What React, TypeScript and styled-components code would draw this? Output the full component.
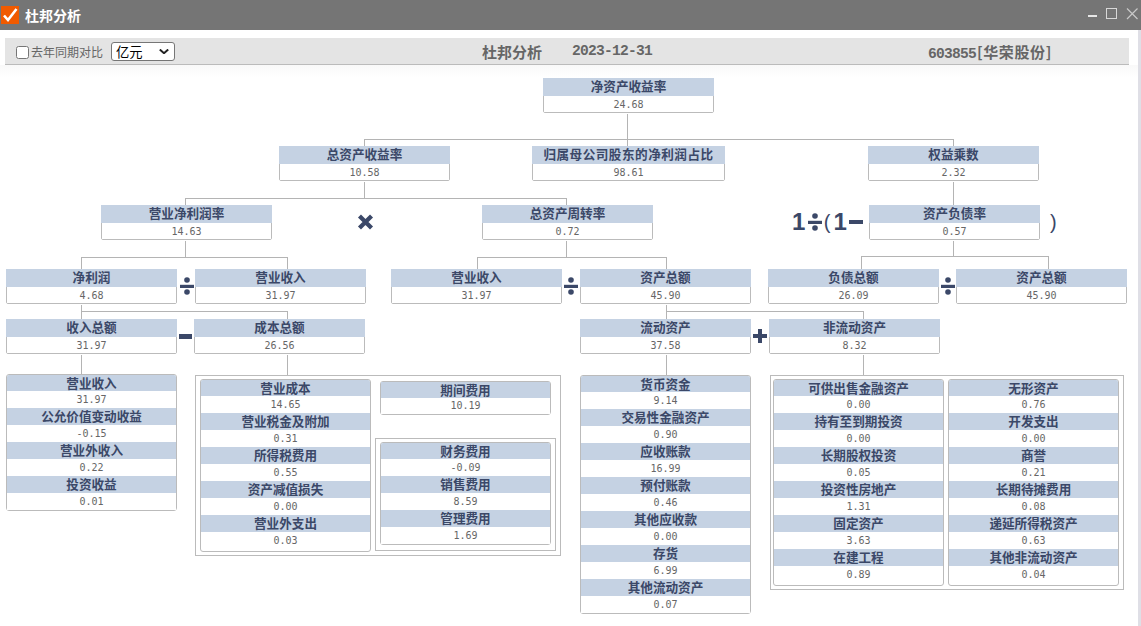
import React from "react";
import styled, { createGlobalStyle } from "styled-components";

const CANVAS_TOP = 65;
const LABEL_FONT = `"Noto Sans CJK SC", "Liberation Sans", sans-serif`;
const NUMBER_FONT = `"Liberation Mono", "Noto Sans CJK SC", monospace`;
const VALUE_FONT = `"DejaVu Sans Mono", "Liberation Mono", monospace`;
const INK = "#3b4868";

type Item = [string, string];

const singleNodes = [
  { x: 543, y: 78, label: "净资产收益率", value: "24.68" },
  { x: 279, y: 146, label: "总资产收益率", value: "10.58" },
  { x: 532, y: 146, w: 193, label: "归属母公司股东的净利润占比", value: "98.61" },
  { x: 868, y: 146, label: "权益乘数", value: "2.32" },
  { x: 101, y: 205, label: "营业净利润率", value: "14.63" },
  { x: 482, y: 205, label: "总资产周转率", value: "0.72" },
  { x: 869, y: 205, label: "资产负债率", value: "0.57" },
  { x: 6, y: 269, label: "净利润", value: "4.68" },
  { x: 195, y: 269, label: "营业收入", value: "31.97" },
  { x: 391, y: 269, label: "营业收入", value: "31.97" },
  { x: 580, y: 269, label: "资产总额", value: "45.90" },
  { x: 768, y: 269, label: "负债总额", value: "26.09" },
  { x: 956, y: 269, label: "资产总额", value: "45.90" },
  { x: 6, y: 319, label: "收入总额", value: "31.97" },
  { x: 194, y: 319, label: "成本总额", value: "26.56" },
  { x: 580, y: 319, label: "流动资产", value: "37.58" },
  { x: 769, y: 319, label: "非流动资产", value: "8.32" },
];

const incomeItems: Item[] = [
  ["营业收入", "31.97"],
  ["公允价值变动收益", "-0.15"],
  ["营业外收入", "0.22"],
  ["投资收益", "0.01"],
];

const costItems: Item[] = [
  ["营业成本", "14.65"],
  ["营业税金及附加", "0.31"],
  ["所得税费用", "0.55"],
  ["资产减值损失", "0.00"],
  ["营业外支出", "0.03"],
];

const periodItems: Item[] = [
  ["财务费用", "-0.09"],
  ["销售费用", "8.59"],
  ["管理费用", "1.69"],
];

const currentItems: Item[] = [
  ["货币资金", "9.14"],
  ["交易性金融资产", "0.90"],
  ["应收账款", "16.99"],
  ["预付账款", "0.46"],
  ["其他应收款", "0.00"],
  ["存货", "6.99"],
  ["其他流动资产", "0.07"],
];

const fixedItemsA: Item[] = [
  ["可供出售金融资产", "0.00"],
  ["持有至到期投资", "0.00"],
  ["长期股权投资", "0.05"],
  ["投资性房地产", "1.31"],
  ["固定资产", "3.63"],
  ["在建工程", "0.89"],
];

const fixedItemsB: Item[] = [
  ["无形资产", "0.76"],
  ["开发支出", "0.00"],
  ["商誉", "0.21"],
  ["长期待摊费用", "0.08"],
  ["递延所得税资产", "0.63"],
  ["其他非流动资产", "0.04"],
];

// connector lines, in page coordinates
const links = [
  "M627 113V146M364 146V139H953V146",
  "M364 181V198M185 205V198H566V205",
  "M953 181V205",
  "M185 240V257M81 269V257H287V269",
  "M566 240V257M477 269V257H666V269",
  "M953 240V256M861 269V256H1048V269",
  "M81 304V319M81 311H287V319",
  "M81 354V374",
  "M287 354V375",
  "M666 304V319M666 311H863V319",
  "M666 354V375",
  "M863 354V375",
  "M466 415V438",
];

const Card = ({ label, value }: { label: string; value: string }) => (
  <>
    <NodeLabel>{label}</NodeLabel>
    <NodeValue>{value}</NodeValue>
  </>
);

const ItemStack = ({ items }: { items: Item[] }) => (
  <Stack>
    {items.map(([label, value]) => (
      <Card key={label} label={label} value={value} />
    ))}
  </Stack>
);

const Divide = ({ x, y }: { x: number; y: number }) => (
  <OperatorIcon $x={x} $y={y} width="14" height="18" viewBox="0 0 14 18">
    <circle cx="7" cy="3" r="2.8" />
    <rect x="0" y="7.8" width="14" height="3.2" />
    <circle cx="7" cy="15" r="2.8" />
  </OperatorIcon>
);

const App = () => {
  return (
    <Page>
      <GlobalStyle />
      <TitleBar>
        <TitleLeft>
          <CheckIcon viewBox="0 0 18 18">
            <path d="M3 9.5 L7 14 L15.5 3" fill="none" stroke="#fff" strokeWidth="2.6" />
          </CheckIcon>
          <TitleText>杜邦分析</TitleText>
        </TitleLeft>
        <WindowControls viewBox="0 0 52 12">
          <path d="M2 8H11" stroke="#e6e6e6" strokeWidth="2" />
          <rect x="20.5" y="0.5" width="10" height="10" fill="none" stroke="#d8d8d8" />
          <path d="M41 0.5L51.5 11M51.5 0.5L41 11" stroke="#c8c8c8" strokeWidth="1.2" />
        </WindowControls>
      </TitleBar>
      <Body>
        <Toolbar>
          <ToolLeft>
            <CompareBox type="checkbox" />
            <CompareText>去年同期对比</CompareText>
            <UnitSelect>
              <span>亿元</span>
              <svg width="10" height="5" viewBox="0 0 10 5">
                <path d="M0.8 0.5L5 4.2L9.2 0.5" fill="none" stroke="#222" strokeWidth="2" />
              </svg>
            </UnitSelect>
          </ToolLeft>
          <ToolTitle>杜邦分析</ToolTitle>
          <ToolDate>2023-12-31</ToolDate>
          <ToolCode>
            603855<CompanyName>[华荣股份]</CompanyName>
          </ToolCode>
        </Toolbar>
        <Canvas>
          <Links>
            <path d={links.join("")} fill="none" stroke="#b4b4b4" shapeRendering="crispEdges" transform={`translate(0.5 ${0.5 - CANVAS_TOP})`} />
          </Links>

          {singleNodes.map((n) => (
            <Node key={`${n.label}${n.x}`} $x={n.x} $y={n.y} $w={n.w ?? 171} $wide={n.label.length > 8}>
              <Card label={n.label} value={n.value} />
            </Node>
          ))}

          <Placed $x={6} $y={374}>
            <ItemStack items={incomeItems} />
          </Placed>

          <Frame $x={195} $y={375}>
            <ItemStack items={costItems} />
            <PeriodColumn>
              <PeriodNode>
                <Card label="期间费用" value="10.19" />
              </PeriodNode>
              <InnerFrame>
                <ItemStack items={periodItems} />
              </InnerFrame>
            </PeriodColumn>
          </Frame>

          <Placed $x={580} $y={375}>
            <ItemStack items={currentItems} />
          </Placed>

          <FixedFrame $x={770} $y={375}>
            <ItemStack items={fixedItemsA} />
            <ItemStack items={fixedItemsB} />
          </FixedFrame>

          <OperatorIcon $x={357} $y={214} width="17" height="16" viewBox="0 0 17 16">
            <path d="M3 2.5L14 13.5M14 2.5L3 13.5" fill="none" stroke={INK} strokeWidth="5.2" strokeLinecap="square" transform="translate(8.5 8) scale(0.82) translate(-8.5 -8)" />
          </OperatorIcon>
          <Divide x={180} y={277} />
          <Divide x={564} y={277} />
          <Divide x={941} y={277} />
          <OperatorIcon $x={179} $y={334} width="13" height="5" viewBox="0 0 13 5">
            <rect width="13" height="5" />
          </OperatorIcon>
          <OperatorIcon $x={753} $y={329} width="14" height="14" viewBox="0 0 14 14">
            <path d="M5 0H9V5H14V9H9V14H5V9H0V5H5Z" />
          </OperatorIcon>

          <Formula $x={792} $y={207}>
            <FormulaDigit>1</FormulaDigit>
            <FormulaDivide width="14" height="18" viewBox="0 0 14 18">
              <circle cx="7" cy="3" r="2.8" />
              <rect x="0" y="7.8" width="14" height="3.2" />
              <circle cx="7" cy="15" r="2.8" />
            </FormulaDivide>
            <FormulaParen>(</FormulaParen>
            <FormulaDigit>1</FormulaDigit>
            <FormulaBar />
          </Formula>
          <ClosingParen $x={1050} $y={207}>)</ClosingParen>
        </Canvas>
      </Body>
      <ScrollEdge />
    </Page>
  );
};

export default App;

const GlobalStyle = createGlobalStyle`
  html, body {
    margin: 0;
    padding: 0;
    background: #fff;
    overflow: hidden;
  }
  * {
    box-sizing: border-box;
  }
`;

const Page = styled.div`
  position: relative;
  width: 1141px;
  height: 626px;
  overflow: hidden;
  background: #fff;
  font-family: ${LABEL_FONT};
`;

const TitleBar = styled.div`
  display: flex;
  align-items: center;
  justify-content: space-between;
  height: 30px;
  padding: 0 3px 0 1px;
  background: #757575;
`;

const TitleLeft = styled.div`
  display: flex;
  align-items: center;
  gap: 6px;
`;

const CheckIcon = styled.svg`
  width: 18px;
  height: 18px;
  background: #f05a00;
`;

const TitleText = styled.span`
  color: #fff;
  font-size: 14px;
  font-weight: 700;
`;

const WindowControls = styled.svg`
  width: 52px;
  height: 12px;
  margin-top: -2px;
`;

const Body = styled.div`
  padding: 8px 12px 0 5px;
`;

const Toolbar = styled.div`
  position: relative;
  display: flex;
  align-items: center;
  width: 1124px;
  height: 27px;
  padding-left: 11px;
  background: #e4e4e4;
  border-bottom: 1px solid #bbb;
  color: #666;
`;

const ToolLeft = styled.div`
  display: flex;
  align-items: center;
  width: 466px;
`;

const CompareBox = styled.input`
  width: 13px;
  height: 13px;
  margin: 2px 2px 0 0;
`;

const CompareText = styled.span`
  font-size: 12px;
  color: #666;
`;

const UnitSelect = styled.div`
  display: flex;
  align-items: center;
  justify-content: space-between;
  width: 64px;
  height: 19px;
  margin-left: 8px;
  padding: 0 5px 0 4px;
  color: #000;
  font-size: 13.3px;
  line-height: 17px;
  background: #fff;
  border: 1px solid #767676;
  border-radius: 3px;
`;

const ToolTitle = styled.span`
  width: 90px;
  font-size: 15px;
  font-weight: 700;
`;

const ToolDate = styled.span`
  width: 356px;
  font-family: ${NUMBER_FONT};
  font-size: 14.6px;
  font-weight: 700;
  letter-spacing: -0.76px;
`;

const ToolCode = styled.span`
  font-family: ${NUMBER_FONT};
  font-size: 14.6px;
  font-weight: 700;
  letter-spacing: -0.76px;
`;

const CompanyName = styled.span`
  margin-left: 1px;
  font-family: ${LABEL_FONT};
  font-size: 15px;
  letter-spacing: 0.6px;
`;

const Canvas = styled.div`
  position: relative;
  margin-left: -5px;
  width: 1141px;
  height: 561px;
  background: linear-gradient(#f9f9f9, #fff 13px);
`;

const Links = styled.svg`
  position: absolute;
  left: 0;
  top: 0;
  width: 1141px;
  height: 561px;
`;

const NodeLabel = styled.div`
  height: 17px;
  background: #c5d2e3;
  color: ${INK};
  font-size: 12.6px;
  font-weight: 700;
  line-height: 16px;
  text-align: center;
  white-space: nowrap;
`;

const NodeValue = styled.div`
  height: 17px;
  background: #fff;
  color: #666;
  font-family: ${VALUE_FONT};
  font-size: 10px;
  line-height: 18px;
  text-align: center;
`;

interface PlaceProps {
  $x: number;
  $y: number;
}

const Placed = styled.div.attrs<PlaceProps>((p) => ({
  style: { left: p.$x, top: p.$y - CANVAS_TOP },
}))<PlaceProps>`
  position: absolute;
  width: 171px;
`;

const Node = styled.div.attrs<PlaceProps & { $w: number; $wide?: boolean }>((p) => ({
  style: { left: p.$x, top: p.$y - CANVAS_TOP, width: p.$w },
}))<PlaceProps & { $w: number; $wide?: boolean }>`
  position: absolute;
  height: 35px;
  background: #fff;
  border: 1px solid #bbb;
  border-radius: 2px;

  ${NodeLabel} {
    height: 18px;
    margin: -1px -1px 0;
    line-height: 16px;
    letter-spacing: ${(p) => (p.$wide ? "0.5px" : "0")};
  }

  ${NodeValue} {
    height: 16px;
    line-height: 17px;
  }
`;

const Stack = styled.div`
  width: 171px;
  flex: none;
  background: #fff;
  border: 1px solid #bbb;
  border-radius: 3px;

  ${NodeLabel}:first-child {
    height: 16px;
    line-height: 15px;
    border-radius: 2px 2px 0 0;
  }
`;

const Frame = styled(Placed)`
  display: flex;
  gap: 4px;
  width: 366px;
  height: 181px;
  padding: 3px 4px;
  background: #fff;
  border: 1px solid #bbb;
`;

const FixedFrame = styled(Frame)`
  width: 354px;
  height: 215px;
  padding: 3px 2px;
`;

const PeriodColumn = styled.div`
  display: flex;
  flex-direction: column;
  align-items: center;
  gap: 23px;
  padding-top: 2px;
`;

const PeriodNode = styled.div`
  width: 171px;
  height: 34px;
  background: #fff;
  border: 1px solid #bbb;
  border-radius: 3px;

  ${NodeLabel} {
    height: 16px;
    line-height: 15px;
  }

  ${NodeValue} {
    height: 16px;
    line-height: 16px;
  }
`;

const InnerFrame = styled.div`
  width: 181px;
  height: 113px;
  padding: 3px 4px;
  background: #fff;
  border: 1px solid #bbb;
`;

const OperatorIcon = styled.svg.attrs<PlaceProps>((p) => ({
  style: { left: p.$x, top: p.$y - CANVAS_TOP },
}))<PlaceProps>`
  position: absolute;
  fill: ${INK};
`;

const Formula = styled.div.attrs<PlaceProps>((p) => ({
  style: { left: p.$x, top: p.$y - CANVAS_TOP },
}))<PlaceProps>`
  position: absolute;
  display: flex;
  align-items: center;
  height: 30px;
  color: ${INK};
  font-family: "Liberation Sans", sans-serif;
`;

const FormulaDigit = styled.span`
  font-size: 24px;
  font-weight: 700;
  line-height: 30px;
`;

const FormulaDivide = styled.svg`
  margin: 0 2px 0 2.5px;
  fill: ${INK};
`;

const FormulaParen = styled.span`
  margin-right: 3px;
  font-size: 20px;
  font-weight: 400;
  line-height: 30px;
`;

const ClosingParen = styled(Placed)`
  width: 8px;
  color: ${INK};
  font-family: "Liberation Sans", sans-serif;
  font-size: 20px;
  line-height: 30px;
`;

const FormulaBar = styled.div`
  width: 14px;
  height: 4px;
  margin-left: 2px;
  background: ${INK};
`;

const ScrollEdge = styled.div`
  position: absolute;
  right: 0;
  top: 30px;
  bottom: 0;
  width: 3px;
  background: #dfdfe6;
`;
